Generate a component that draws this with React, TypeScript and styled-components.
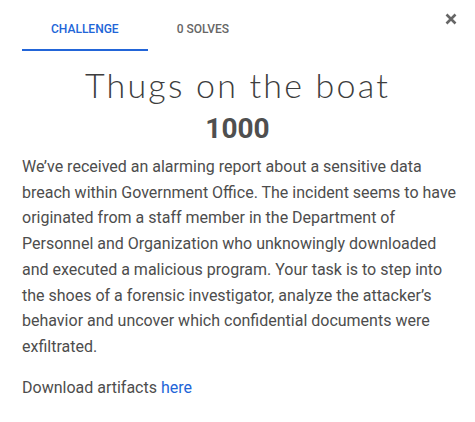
import React from "react";
import styled, { createGlobalStyle } from "styled-components";

const Global = createGlobalStyle`
  html, body { margin: 0; padding: 0; background: #fff; }
  body { font-family: Roboto, "Liberation Sans", sans-serif; }
`;

const Modal = styled.div`
  position: relative;
  width: 475px;
  height: 422px;
  box-sizing: border-box;
  padding-top: 8px;
  background: #fff;
`;

const Close = styled.button`
  position: absolute;
  top: 12px;
  right: 17px;
  width: 14px;
  height: 14px;
  padding: 0;
  border: 0;
  background: none;
  display: flex;
  align-items: center;
  justify-content: center;
  cursor: pointer;
`;

const Tabs = styled.nav`
  display: flex;
  padding-left: 22px;
`;

const Tab = styled.div<{ $active?: boolean }>`
  padding: 14px 29px 13px;
  font-size: 12px;
  line-height: 14px;
  font-weight: 500;
  text-transform: uppercase;
  color: ${(p) => (p.$active ? "#2265d8" : "#666")};
  border-bottom: 2px solid ${(p) => (p.$active ? "#2265d8" : "transparent")};
`;

const Title = styled.h1`
  margin: 14px 0 0;
  text-align: center;
  font-family: Lato, sans-serif;
  font-weight: 300;
  font-size: 34px;
  line-height: 40px;
  letter-spacing: 2.2px;
  color: #3d3d3d;
`;

const Points = styled.h2`
  margin: 7px 0 0;
  text-align: center;
  font-size: 28px;
  line-height: 34px;
  font-weight: 700;
  color: #4f4f4f;
`;

const Body = styled.div`
  padding: 0 16px 0 22px;
  margin-top: 8px;
  font-size: 16px;
  line-height: 25.7px;
  color: #4d4d4d;
  p { margin: 0 0 15px; }
`;

const Link = styled.a`
  color: #2265d8;
  text-decoration: none;
`;

export default function App() {
  return (
    <>
      <Global />
      <Modal>
        <Close aria-label="Close">
          <svg width="12" height="12" viewBox="0 0 12 12">
            <path d="M1.5 1.5 L10.5 10.5 M10.5 1.5 L1.5 10.5" stroke="#666" strokeWidth="2.6" strokeLinecap="butt" />
          </svg>
        </Close>
        <Tabs>
          <Tab $active>Challenge</Tab>
          <Tab>0 Solves</Tab>
        </Tabs>
        <Title>Thugs on the boat</Title>
        <Points>1000</Points>
        <Body>
          <p>
            We’ve received an alarming report about a sensitive data breach within Government Office. The incident seems to have originated from a staff member in the Department of Personnel and Organization who unknowingly downloaded and executed a malicious program. Your task is to step into the shoes of a forensic investigator, analyze the attacker’s behavior and uncover which confidential documents were exfiltrated.
          </p>
          <p>
            Download artifacts <Link href="#">here</Link>
          </p>
        </Body>
      </Modal>
    </>
  );
}
